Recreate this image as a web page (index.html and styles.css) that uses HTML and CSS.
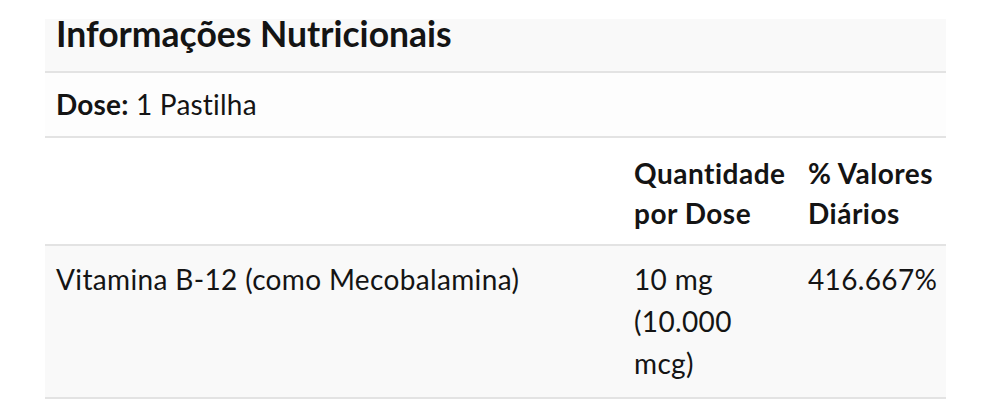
FILE: index.html
```html
<!DOCTYPE html>
<html lang="pt">
<head>
<meta charset="utf-8">
<link rel="stylesheet" href="styles.css">
</head>
<body>
<section class="panel">
  <h3 class="title">Informações Nutricionais</h3>
  <div class="dose"><strong>Dose:</strong> 1 Pastilha</div>
  <div class="grid head">
    <div class="cell c1"></div>
    <div class="cell c2">Quantidade por Dose</div>
    <div class="cell c3">% Valores Diários</div>
  </div>
  <div class="grid item">
    <div class="cell c1">Vitamina B-12 (como Mecobalamina)</div>
    <div class="cell c2">10 mg (10.000 mcg)</div>
    <div class="cell c3">416.667%</div>
  </div>
</section>
</body>
</html>
```
FILE: styles.css
```css
html, body { margin: 0; padding: 0; background: #fff; }
body {
  font-family: Lato, "Open Sans", sans-serif;
  color: #141414;
  font-variant-ligatures: none;
  font-feature-settings: "liga" 0;
}
.panel { margin: 19px 46px 0 45px; width: 901px; }
.title {
  margin: 0;
  background: #f9f9f9;
  font-size: 35.5px;
  font-weight: 700;
  line-height: 29px;
  padding: 0 11px 23px;
  border-bottom: 2px solid #e3e3e3;
}
.dose {
  background: #fdfdfd;
  font-size: 28px;
  line-height: 42px;
  letter-spacing: 0.2px;
  padding: 10px 11px 11px;
  border-bottom: 2px solid #e3e3e3;
}
.dose strong { font-weight: 700; }
.grid {
  display: grid;
  grid-template-columns: 1fr 174px 149px;
  font-size: 28px;
  border-bottom: 2px solid #e3e3e3;
}
.cell { padding: 0 11px; }
.c3 { padding-right: 4px; }
.head { background: #fff; font-weight: 700; line-height: 40px; letter-spacing: 0.5px; }
.head .cell { padding-top: 15px; padding-bottom: 11px; }
.item { background: #f9f9f9; line-height: 42px; letter-spacing: 0.35px; }
.item .cell { padding-top: 12px; padding-bottom: 13px; }
```
